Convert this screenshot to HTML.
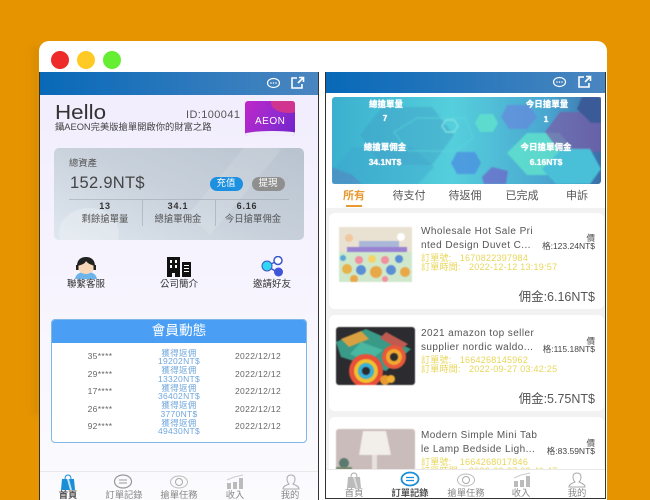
<!DOCTYPE html>
<html><head><meta charset="utf-8"><style>
html,body{margin:0;padding:0;width:650px;height:500px;overflow:hidden}
body{position:relative;background:#e69500;font-family:"Liberation Sans","Noto Sans CJK TC",sans-serif;color:#333}
div,svg{position:absolute}
#w{left:0;top:0;width:650px;height:500px;overflow:hidden;filter:blur(.35px)}
.t{position:absolute;white-space:nowrap;line-height:12px;height:12px}
.c{transform:translateX(-50%)}
.r{transform:translateX(-100%)}
.y{color:#e8d65a;font-size:9px;letter-spacing:.25px}
.o{color:#555;font-size:10px;letter-spacing:.42px}
.p{color:#444;font-size:8.5px}
.m{color:#555;font-size:12.5px}
.gr{color:#666;font-size:8.5px;letter-spacing:.35px}
.bl{color:#6fa6dc;font-size:8.5px;letter-spacing:.3px}
.w{color:#fff;font-weight:bold;font-size:8.5px;text-shadow:0 0 1px #fff}
.card{left:3px;width:275px;background:#fff;border-radius:6px}
</style></head><body><div id="w">
<div style="left:32px;top:45px;width:8px;height:370px;background:#d98d00;filter:blur(3px)"></div>
<div style="left:39px;top:41px;width:568px;height:459px;background:#fff;border-radius:10px 10px 0 0"></div>
<div style="left:51px;top:51px;width:18px;height:18px;border-radius:50%;background:#ee2a2a"></div>
<div style="left:77px;top:51px;width:18px;height:18px;border-radius:50%;background:#ffc926"></div>
<div style="left:103px;top:51px;width:18px;height:18px;border-radius:50%;background:#66ee33"></div>

<!-- LEFT PHONE -->
<div style="left:39px;top:72px;width:280px;height:428px;background:linear-gradient(#f1edfd,#f6f3fe 45%,#fbfbfe 100%);overflow:hidden;border-left:1px solid #333;border-right:1px solid #333;box-sizing:border-box">
<div style="left:0;top:0;width:280px;height:23px;background:linear-gradient(90deg,#0869b8,#4a86c0)"></div>
</div>
<svg style="left:266px;top:76px" width="16" height="14" viewBox="0 0 16 14"><ellipse cx="7.500" cy="7" rx="6" ry="4.500" fill="none" stroke="#fff" stroke-width="1.200"/><circle cx="5" cy="7" r=".8" fill="#fff"/><circle cx="7.500" cy="7" r=".8" fill="#fff"/><circle cx="10" cy="7" r=".8" fill="#fff"/></svg>
<svg style="left:290px;top:76px" width="15" height="14" viewBox="0 0 15 14"><path d="M7 2H2v10h10V8M8 7l5-5M9 1.500h4.500V6" fill="none" stroke="#fff" stroke-width="1.600"/></svg>

<span class="t" style="left:55px;top:106px;font-size:20px;line-height:14px;color:#333;transform:scaleX(1.12);transform-origin:left center">Hello</span>
<span class="t" style="left:186px;top:109px;font-size:11px;color:#555;letter-spacing:.4px">ID:100041</span>
<span class="t" style="left:55px;top:121px;font-size:9.3px;color:#444">鑷AEON完美版搶單開啟你的財富之路</span>
<div style="left:245px;top:101px;width:50px;height:35px;border-radius:3px;background:linear-gradient(120deg,#c027c8,#8f2bd0 60%,#6e22c8);overflow:hidden">
<div style="left:26px;top:-8px;width:36px;height:20px;border-radius:50%;background:#d0348e"></div>
<div style="left:-5px;top:30px;width:65px;height:10px;background:#f1edfd;border-radius:50%"></div>
<span class="t" style="left:10px;top:15px;color:#fff;font-size:10px;letter-spacing:.5px">AEON</span>
</div>

<div style="left:54px;top:148px;width:250px;height:92px;border-radius:5px;background:linear-gradient(25deg,#dfe7ef,#c8d1db 50%,#b9c3cf);overflow:hidden">
<div style="left:165px;top:-20px;width:30px;height:110px;background:rgba(255,255,255,.12);transform:rotate(40deg)"></div>
<div style="left:5px;top:60px;width:60px;height:50px;border-radius:50%;background:rgba(255,255,255,.25)"></div>
<div style="left:15px;top:51px;width:220px;height:1px;background:rgba(150,160,170,.5)"></div>
<div style="left:88px;top:52px;width:1px;height:26px;background:rgba(150,160,170,.5)"></div>
<div style="left:161px;top:52px;width:1px;height:26px;background:rgba(150,160,170,.5)"></div>
</div>
<span class="t" style="left:69px;top:157px;font-size:9.300px;color:#555">總資產</span>
<span class="t" style="left:70px;top:177px;font-size:16.500px;color:#444;letter-spacing:.3px">152.9NT$</span>
<div style="left:210px;top:177px;width:33px;height:14px;border-radius:7px;background:#1e90e0"></div>
<span class="t c" style="left:226px;top:178px;font-size:9.500px;color:#fff">充值</span>
<div style="left:252px;top:177px;width:33px;height:14px;border-radius:7px;background:#8f8f8f"></div>
<span class="t c" style="left:268px;top:178px;font-size:9.500px;color:#fff">提現</span>
<span class="t c" style="left:105px;top:200px;font-size:9px;font-weight:bold;color:#333;letter-spacing:.8px">13</span>
<span class="t c" style="left:178px;top:200px;font-size:9px;font-weight:bold;color:#333;letter-spacing:.8px">34.1</span>
<span class="t c" style="left:247px;top:200px;font-size:9px;font-weight:bold;color:#333;letter-spacing:.8px">6.16</span>
<span class="t c" style="left:105px;top:213px;font-size:9.400px;color:#555">剩餘搶單量</span>
<span class="t c" style="left:178px;top:213px;font-size:9.400px;color:#555">總搶單佣金</span>
<span class="t c" style="left:253px;top:213px;font-size:9.400px;color:#555">今日搶單佣金</span>

<!-- icons row -->
<svg style="left:74px;top:256px" width="24" height="23" viewBox="0 0 24 23"><path d="M1 23c1-6 6-7 11-7s10 1 11 7z" fill="#6db4ea"/><ellipse cx="12" cy="11" rx="8" ry="7" fill="#f9d7b8"/><path d="M3 10C3 3 8 1 12 1s9 2 9 9c-3-1-7-2-9-5-1 3-5 4-9 5z" fill="#222"/><rect x="2" y="9" width="2.500" height="5" fill="#222"/><rect x="19.500" y="9" width="2.500" height="5" fill="#222"/></svg>
<svg style="left:167px;top:257px" width="24" height="20" viewBox="0 0 24 20"><path d="M0 0h13v20H8v-4H5v4H0z" fill="#111"/><path d="M15 5h9v15h-9z" fill="#111"/><path d="M3 3h2v3H3zM8 3h2v3H8zM3 8h2v3H3zM8 8h2v3H8zM17 8h5v1h-5zM17 11h5v1h-5zM17 14h5v1h-5z" fill="#fff"/></svg>
<svg style="left:260px;top:256px" width="24" height="22" viewBox="0 0 24 22"><path d="M17 5L7 10l10 6" stroke="#4455cc" stroke-width="1.500" fill="none"/><circle cx="7" cy="10" r="5" fill="#33d6ee" stroke="#3a55c8"/><circle cx="18" cy="4.500" r="4" fill="#fff" stroke="#3a55c8" stroke-width="1.500"/><circle cx="18.500" cy="16" r="4.500" fill="#3d55d6"/></svg>
<span class="t c" style="left:86px;top:279px;font-size:9.500px;color:#333">聯繫客服</span>
<span class="t c" style="left:179px;top:279px;font-size:9.500px;color:#333">公司簡介</span>
<span class="t c" style="left:272px;top:279px;font-size:9.500px;color:#333">邀請好友</span>

<!-- member card -->
<div style="left:51px;top:319px;width:256px;height:124px;border-radius:4px;background:#fff;border:1px solid #7fb8e6;box-sizing:border-box;overflow:hidden">
<div style="left:0;top:0;width:256px;height:23px;background:#4a9ff5"></div>
</div>
<span class="t c" style="left:179px;top:325px;font-size:13.700px;color:#fff">會員動態</span>
<span class="t c gr" style="left:100px;top:350px">35****</span><span class="t c bl" style="left:179px;top:347px">獲得返佣</span><span class="t c bl" style="left:179px;top:355px">19202NT$</span><span class="t c gr" style="left:258px;top:350px">2022/12/12</span>
<span class="t c gr" style="left:100px;top:368px">29****</span><span class="t c bl" style="left:179px;top:364px">獲得返佣</span><span class="t c bl" style="left:179px;top:373px">13320NT$</span><span class="t c gr" style="left:258px;top:368px">2022/12/12</span>
<span class="t c gr" style="left:100px;top:385px">17****</span><span class="t c bl" style="left:179px;top:382px">獲得返佣</span><span class="t c bl" style="left:179px;top:390px">36402NT$</span><span class="t c gr" style="left:258px;top:385px">2022/12/12</span>
<span class="t c gr" style="left:100px;top:403px">26****</span><span class="t c bl" style="left:179px;top:399px">獲得返佣</span><span class="t c bl" style="left:179px;top:408px">3770NT$</span><span class="t c gr" style="left:258px;top:403px">2022/12/12</span>
<span class="t c gr" style="left:100px;top:420px">92****</span><span class="t c bl" style="left:179px;top:417px">獲得返佣</span><span class="t c bl" style="left:179px;top:425px">49430NT$</span><span class="t c gr" style="left:258px;top:420px">2022/12/12</span>

<!-- left nav -->
<div style="left:40px;top:471px;width:278px;height:1px;background:#e8e8e8"></div>
<svg style="left:60px;top:474px" width="16" height="16" viewBox="0 0 16 16"><path d="M2 5h12l1 11H1z" fill="#1a8fd8"/><path d="M5 5c0-3 1-4 3-4s3 1 3 4" stroke="#1a8fd8" fill="none"/><path d="M7 5l3 11h2L9 5z" fill="#bfe3fa"/></svg>
<svg style="left:113px;top:474px" width="20" height="15" viewBox="0 0 20 15"><ellipse cx="10" cy="7.500" rx="8.500" ry="6.500" fill="none" stroke="#999" stroke-width="1.200"/><path d="M6 6h8M14 9H6" stroke="#999"/></svg>
<svg style="left:169px;top:475px" width="20" height="14" viewBox="0 0 20 14"><ellipse cx="10" cy="7" rx="8.500" ry="6" fill="none" stroke="#bbb"/><circle cx="10" cy="7" r="3.500" fill="none" stroke="#aaa"/></svg>
<svg style="left:226px;top:474px" width="18" height="15" viewBox="0 0 18 15"><path d="M1 9h4v6H1zM7 8h4v7H7zM13 4h4v11h-4z" fill="#bbb"/><path d="M1 6l7-3 9-2" stroke="#ccc" fill="none"/></svg>
<svg style="left:282px;top:474px" width="18" height="16" viewBox="0 0 18 16"><path d="M9 1c3 0 4 2 4 4s-1 4-2 5c2 1 6 2 6 5H1c0-3 4-4 6-5-1-1-2-3-2-5s1-4 4-4z" fill="none" stroke="#aaa"/></svg>
<span class="t c" style="left:68px;top:489px;font-size:9.300px;color:#555;font-weight:bold">首頁</span>
<span class="t c" style="left:124px;top:489px;font-size:9.300px;color:#888">訂單記錄</span>
<span class="t c" style="left:179px;top:489px;font-size:9.300px;color:#888">搶單任務</span>
<span class="t c" style="left:235px;top:489px;font-size:9.300px;color:#888">收入</span>
<span class="t c" style="left:290px;top:489px;font-size:9.300px;color:#888">我的</span>

<!-- RIGHT PHONE -->
<div style="left:325px;top:72px;width:281px;height:427px;background:#f2f2f2;overflow:hidden;box-sizing:border-box;border:1px solid #333;border-top:0">
<div style="left:0;top:0;width:280px;height:21px;background:linear-gradient(90deg,#0869b8,#4a86c0)"></div>
<div style="left:0;top:21px;width:280px;height:115px;background:#fff"></div>
<div class="card" style="top:141px;height:96px"></div>
<div class="card" style="top:243px;height:96px"></div>
<div class="card" style="top:345px;height:96px"></div>

<!-- images -->
<svg style="left:13px;top:155px;filter:blur(.6px)" width="73" height="55" viewBox="0 0 73 55">
<rect width="73" height="55" fill="#e9e2d2"/><rect x="20" y="14" width="40" height="7" fill="#a9b6d8"/><rect x="8" y="20" width="60" height="6" fill="#9a82d2"/>
<circle cx="10" cy="11" r="4" fill="#f0c8a0"/><circle cx="62" cy="10" r="4" fill="#fff"/>
<rect x="0" y="25" width="73" height="30" fill="#cfe8cc"/>
<circle cx="8" cy="42" r="5" fill="#e8b24a"/><circle cx="20" cy="33" r="4" fill="#f28fa0"/><circle cx="33" cy="32" r="4" fill="#f5d36a"/><circle cx="46" cy="33" r="4" fill="#f28fa0"/><circle cx="60" cy="32" r="4" fill="#5a8fd6"/><circle cx="22" cy="43" r="5" fill="#5a8fd6"/><circle cx="37" cy="45" r="6" fill="#e8a84a"/><circle cx="52" cy="43" r="5" fill="#5a8fd6"/><circle cx="66" cy="45" r="5" fill="#e8a84a"/><circle cx="15" cy="52" r="4" fill="#e8a84a"/><circle cx="46" cy="52" r="3" fill="#f28fa0"/><circle cx="4" cy="31" r="3" fill="#5aa8d6"/>
</svg>
<svg style="left:10px;top:255px;filter:blur(.5px)" width="79" height="58" viewBox="0 0 79 58"><rect width="79" height="58" rx="3" fill="#2c2c30"/>
<path d="M0 15L30 2l45 20-25 22L5 30z" fill="#3a9a88"/><path d="M5 12L25 4l8 8-20 8z" fill="#d8a040"/><path d="M50 5l22 12-8 6-20-12z" fill="#c05a50"/><path d="M25 15l22 8-15 12-18-8z" fill="#4ab8a0"/>
<circle cx="30" cy="44" r="17" fill="#e8503a"/><circle cx="30" cy="44" r="12" fill="#f0c030"/><circle cx="30" cy="44" r="8" fill="#3ab0d8"/><circle cx="30" cy="44" r="4" fill="#2c2c30"/>
<circle cx="58" cy="30" r="12" fill="#e8583a"/><circle cx="58" cy="30" r="8" fill="#f0a830"/><circle cx="58" cy="30" r="4" fill="#2c2c30"/>
<circle cx="49" cy="53" r="5" fill="#e89a30"/><circle cx="55" cy="52" r="4" fill="#f0b030"/></svg>
<svg style="left:10px;top:357px;filter:blur(.5px)" width="79" height="44" viewBox="0 0 79 44"><rect width="79" height="44" rx="3" fill="#c9bcba"/><path d="M27 2h23l5 24H23z" fill="#f2eeea"/><rect x="36" y="26" width="5" height="18" fill="#e8e2dc"/><circle cx="8" cy="34" r="5" fill="#5a7a70"/><rect x="0" y="38" width="16" height="6" fill="#7a8a70"/></svg>

<!-- banner -->
<svg style="left:6px;top:25px" width="269" height="87" viewBox="0 0 269 87">
<defs><linearGradient id="bg" x1="0" y1="0" x2="1" y2="0"><stop offset="0" stop-color="#3bb0cf"/><stop offset=".45" stop-color="#55cfdc"/><stop offset=".8" stop-color="#4aa6d0"/><stop offset="1" stop-color="#3a6ea8"/></linearGradient><filter id="s"><feGaussianBlur stdDeviation=".7"/></filter></defs>
<rect width="269" height="87" rx="3" fill="url(#bg)"/>
<g filter="url(#s)">
<path d="M50 10h50l22 28-22 30H50L28 38z" fill="#3f9cc4" opacity=".4"/>
<path d="M20 50h60l22 20-16 17H30L4 70z" fill="#3fa0cc" opacity=".35"/>
<path d="M195 36h32l18 20-18 22h-32l-20-22z" fill="#5fe0cc" opacity=".85"/>
<path d="M228 15h36l5 10v30l-41 0-15-20z" fill="#7a5ca8" opacity=".7"/>
<path d="M230 52h28l11 20-11 15h-34l-14-15z" fill="#48c0d8"/>
<path d="M250 0h19v26h-10l-14-14z" fill="#3a5a98"/>
<path d="M150 80l10-10 16 4-2 13h-22z" fill="#7060c8" opacity=".7"/>
<path d="M0 70l20 8 10 9H0z" fill="#5a70b8" opacity=".45"/>
<path d="M148 17h13l5 9-5 9h-13l-5-9z" fill="#5fe0cc" opacity=".85"/>
<path d="M114 23l8 0 4 6-4 6-8 0-4-6z" fill="none" stroke="#8fe8e8"/>
<path d="M125 55h18l6 11-6 11h-18l-6-11z" fill="#4a90e0" opacity=".8"/>
<path d="M85 21h48l8 20-18 13H76L62 35z" fill="none" stroke="#5fe0e0" opacity=".5"/>
<path d="M175 8h22l8 12-10 12h-18l-8-12z" fill="#6a80e0" opacity=".6"/>
</g>
</svg>
<span class="t c w" style="left:60px;top:26px">總搶單量</span>
<span class="t c w" style="left:59px;top:40px">7</span>
<span class="t c w" style="left:221px;top:26px">今日搶單量</span>
<span class="t c w" style="left:220px;top:41px">1</span>
<span class="t c w" style="left:59px;top:69px">總搶單佣金</span>
<span class="t c w" style="left:59px;top:84px">34.1NT$</span>
<span class="t c w" style="left:220px;top:69px">今日搶單佣金</span>
<span class="t c w" style="left:220px;top:84px">6.16NT$</span>

<!-- tabs -->
<span class="t c" style="left:28px;top:118px;font-size:11px;color:#e69a30;font-weight:bold">所有</span>
<span class="t c" style="left:83px;top:118px;font-size:11px;color:#555">待支付</span>
<span class="t c" style="left:139px;top:118px;font-size:11px;color:#555">待返佣</span>
<span class="t c" style="left:196px;top:118px;font-size:11px;color:#555">已完成</span>
<span class="t c" style="left:251px;top:118px;font-size:11px;color:#555">申訴</span>
<div style="left:20px;top:133px;width:16px;height:2px;background:#e69a30"></div>

<!-- order 1 -->
<span class="t o" style="left:95px;top:154px">Wholesale Hot Sale Pri</span>
<span class="t o" style="left:95px;top:168px">nted Design Duvet C...</span>
<span class="t p r" style="left:269px;top:160px">價</span>
<span class="t p r" style="left:269px;top:168px">格:123.24NT$</span>
<span class="t y" style="left:95px;top:180px">訂單號:&nbsp; &nbsp;1670822397984</span>
<span class="t y" style="left:95px;top:189px">訂單時間:&nbsp; &nbsp;2022-12-12 13:19:57</span>
<span class="t m r" style="left:269px;top:219px">佣金:6.16NT$</span>
<!-- order 2 -->
<span class="t o" style="left:95px;top:256px">2021 amazon top seller</span>
<span class="t o" style="left:95px;top:270px">supplier nordic waldo...</span>
<span class="t p r" style="left:269px;top:263px">價</span>
<span class="t p r" style="left:269px;top:271px">格:115.18NT$</span>
<span class="t y" style="left:95px;top:282px">訂單號:&nbsp; &nbsp;1664268145962</span>
<span class="t y" style="left:95px;top:291px">訂單時間:&nbsp; &nbsp;2022-09-27 03:42:25</span>
<span class="t m r" style="left:269px;top:321px">佣金:5.75NT$</span>
<!-- order 3 -->
<span class="t o" style="left:95px;top:358px">Modern Simple Mini Tab</span>
<span class="t o" style="left:95px;top:372px">le Lamp Bedside Ligh...</span>
<span class="t p r" style="left:269px;top:365px">價</span>
<span class="t p r" style="left:269px;top:373px">格:83.59NT$</span>
<span class="t y" style="left:95px;top:384px">訂單號:&nbsp; &nbsp;1664268017846</span>
<span class="t y" style="left:95px;top:393px">訂單時間:&nbsp; &nbsp;2022-09-27 03:40:47</span>

<!-- nav -->
<div style="left:0;top:397px;width:280px;height:30px;background:#fff;border-top:1px solid #e8e8e8"></div>
<svg style="left:20px;top:400px" width="16" height="16" viewBox="0 0 16 16"><path d="M2 5h12l1 11H1z" fill="#bbb"/><path d="M5 5c0-3 1-4 3-4s3 1 3 4" stroke="#aaa" fill="none"/><path d="M7 5l3 11h2L9 5z" fill="#ddd"/></svg>
<svg style="left:74px;top:399px" width="20" height="16" viewBox="0 0 20 16"><ellipse cx="10" cy="8" rx="8.500" ry="6.500" fill="none" stroke="#1a8fd8" stroke-width="1.800"/><path d="M6 6.500h8M14 9.500H6" stroke="#1a8fd8" stroke-width="1.200"/></svg>
<svg style="left:130px;top:401px" width="20" height="14" viewBox="0 0 20 14"><ellipse cx="10" cy="7" rx="8.500" ry="6" fill="none" stroke="#bbb"/><circle cx="10" cy="7" r="3.500" fill="none" stroke="#aaa"/></svg>
<svg style="left:187px;top:400px" width="18" height="15" viewBox="0 0 18 15"><path d="M1 9h4v6H1zM7 8h4v7H7zM13 4h4v11h-4z" fill="#bbb"/><path d="M1 6l7-3 9-2" stroke="#ccc" fill="none"/></svg>
<svg style="left:242px;top:400px" width="18" height="16" viewBox="0 0 18 16"><path d="M9 1c3 0 4 2 4 4s-1 4-2 5c2 1 6 2 6 5H1c0-3 4-4 6-5-1-1-2-3-2-5s1-4 4-4z" fill="none" stroke="#aaa"/></svg>
<span class="t c" style="left:28px;top:415px;font-size:9.300px;color:#888">首頁</span>
<span class="t c" style="left:84px;top:415px;font-size:9.300px;color:#555;font-weight:bold">訂單記錄</span>
<span class="t c" style="left:140px;top:415px;font-size:9.300px;color:#888">搶單任務</span>
<span class="t c" style="left:195px;top:415px;font-size:9.300px;color:#888">收入</span>
<span class="t c" style="left:251px;top:415px;font-size:9.300px;color:#888">我的</span>
</div>
<svg style="left:552px;top:75px" width="16" height="14" viewBox="0 0 16 14"><ellipse cx="7.500" cy="7" rx="6" ry="4.500" fill="none" stroke="#fff" stroke-width="1.200"/><circle cx="5" cy="7" r=".8" fill="#fff"/><circle cx="7.500" cy="7" r=".8" fill="#fff"/><circle cx="10" cy="7" r=".8" fill="#fff"/></svg>
<svg style="left:577px;top:75px" width="15" height="14" viewBox="0 0 15 14"><path d="M7 2H2v10h10V8M8 7l5-5M9 1.500h4.500V6" fill="none" stroke="#fff" stroke-width="1.600"/></svg>
</div></body></html>
